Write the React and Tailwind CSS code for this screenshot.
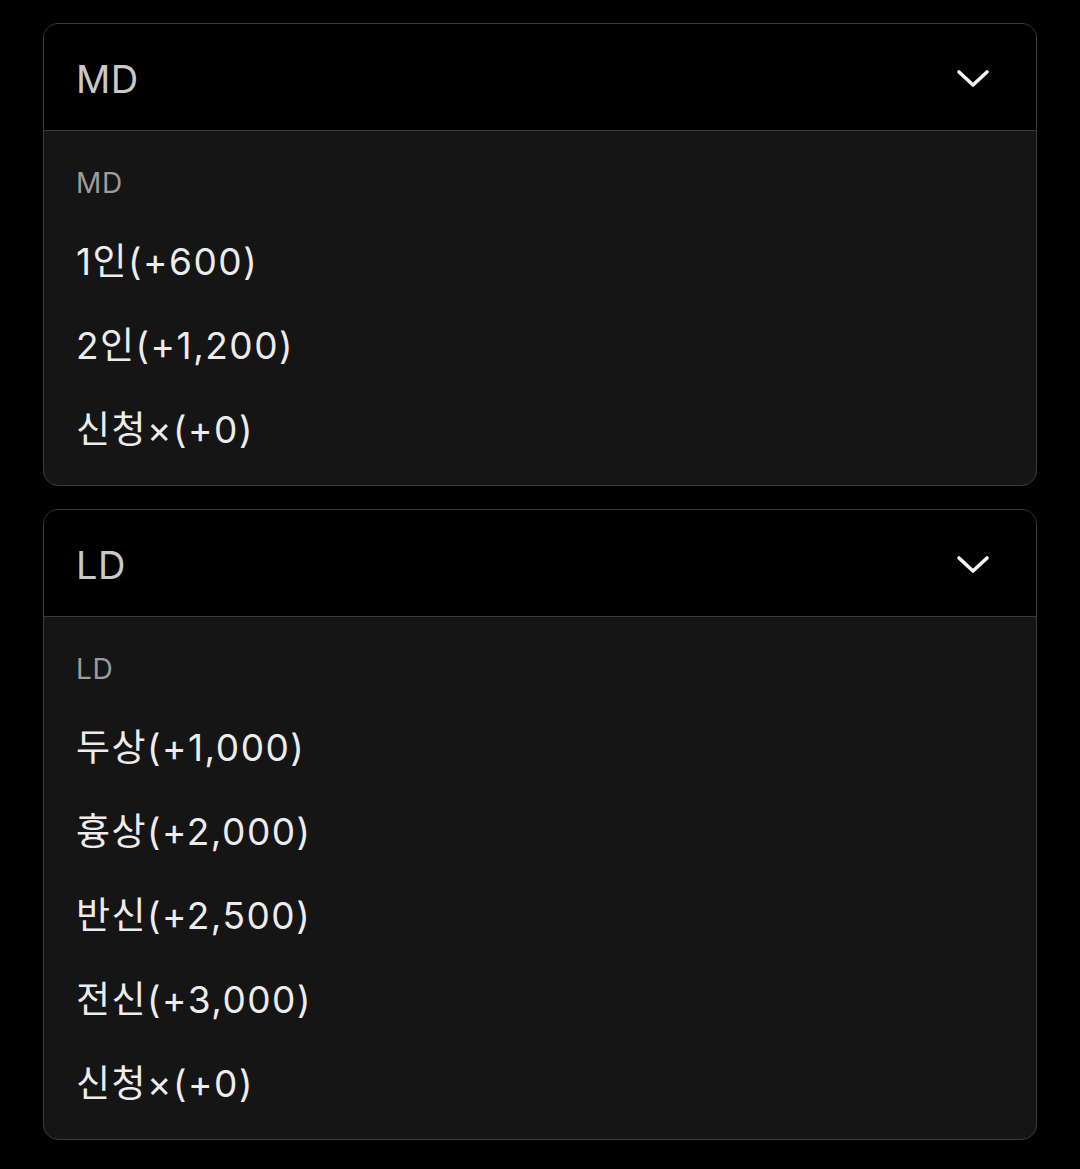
import React from "react";

const groups = [
  {
    title: "MD",
    options: ["1인(+600)", "2인(+1,200)", "신청×(+0)"],
  },
  {
    title: "LD",
    options: ["두상(+1,000)", "흉상(+2,000)", "반신(+2,500)", "전신(+3,000)", "신청×(+0)"],
  },
];

function Chevron() {
  return (
    <svg width="34" height="22" viewBox="0 0 34 22" fill="none" className="text-[#f2f2f2]">
      <path d="M3 4 L17 17 L31 4" stroke="currentColor" strokeWidth="3.6" strokeLinecap="round" strokeLinejoin="round" />
    </svg>
  );
}

function OptionGroup({ title, options }) {
  return (
    <div className="rounded-[15px] border border-[#3b3b3b] overflow-hidden bg-[#151515]">
      <div className="h-[107px] pt-[4px] bg-black border-b border-[#3b3b3b] flex items-center justify-between pl-[32px] pr-[46px]">
        <span className="text-[38px] tracking-[0.5px] text-[#c9c9c9] leading-none">{title}</span>
        <Chevron />
      </div>
      <div className="pt-[32px] pb-[13px] pl-[32px]">
        <div className="h-[40px] flex items-center text-[28px] tracking-[0.6px] text-[#9c9c9c]">{title}</div>
        <div className="mt-[17px]">
          {options.map((o, i) => (
            <div key={i} className="h-[84px] flex items-center text-[37px] tracking-[1.5px] text-[#ececec]">
              {o}
            </div>
          ))}
        </div>
      </div>
    </div>
  );
}

export default function App() {
  return (
    <div
      className="min-h-[1169px] w-[1080px] bg-black pt-[23px] pl-[43px] pr-[43px] flex flex-col gap-[23px]"
      style={{ fontFamily: 'Inter, "Noto Sans CJK KR", sans-serif' }}
    >
      {groups.map((g) => (
        <OptionGroup key={g.title} {...g} />
      ))}
    </div>
  );
}
